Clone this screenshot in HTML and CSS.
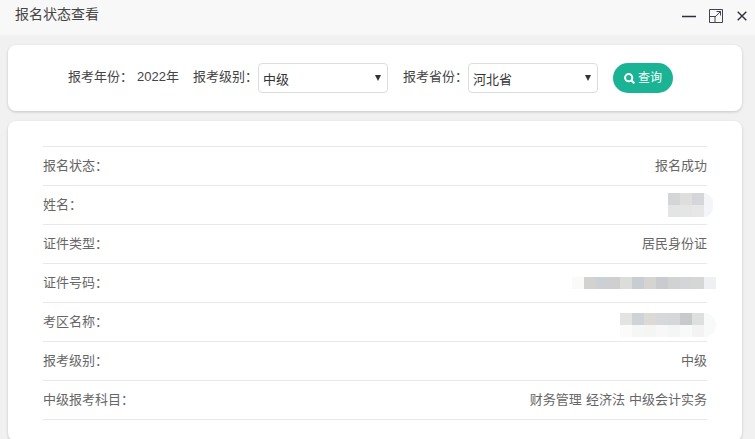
FILE: index.html
```html
<!DOCTYPE html>
<html lang="zh-CN">
<head>
<meta charset="utf-8">
<title>报名状态查看</title>
<link rel="stylesheet" href="styles.css">
</head>
<body>
<header class="titlebar">
  <h1 class="title">报名状态查看</h1>
  <div class="winbtns">
    <svg class="ico" width="14" height="14" viewBox="0 0 14 14"><path d="M0 7.500h14" stroke="#2f2f3a" stroke-width="1.500" fill="none"/></svg>
    <svg class="ico" width="14" height="14" viewBox="0 0 14 14"><path d="M.5.5h13v13H.5zM.5 7.500h5.500v6M6 8l5.500-5.500M7.500 2.500h4v4" stroke="#44444e" fill="none"/></svg>
    <svg class="ico close" width="10" height="10" viewBox="0 0 10 10"><path d="M.7.7l8.600 8.600M9.300.7l-8.600 8.600" stroke="#2f2f3a" stroke-width="1.400" fill="none"/></svg>
  </div>
</header>
<main class="content">
  <section class="card filter">
    <span class="flabel">报考年份：</span>
    <span class="year">2022年</span>
    <span class="flabel">报考级别：</span>
    <span class="select level">中级<i class="caret"></i></span>
    <span class="flabel">报考省份：</span>
    <span class="select province">河北省<i class="caret"></i></span>
    <button class="search"><svg width="11" height="11" viewBox="0 0 11 11"><circle cx="4.700" cy="4.700" r="3.600" stroke="#fff" stroke-width="2" fill="none"/><path d="M7.300 7.300l3 3" stroke="#fff" stroke-width="2.200" fill="none"/></svg>查询</button>
  </section>
  <section class="card info">
    <div class="row"><span>报名状态：</span><span>报名成功</span></div>
    <div class="row"><span>姓名：</span><span class="mosaic m1"><i></i><i></i><i></i><i></i><i></i><i></i><i></i></span></div>
    <div class="row"><span>证件类型：</span><span>居民身份证</span></div>
    <div class="row"><span>证件号码：</span><span class="mosaic m2"><i></i><i></i><i></i><i></i><i></i><i></i><i></i><i></i><i></i><i></i><i></i><i></i></span></div>
    <div class="row"><span>考区名称：</span><span class="mosaic m3"><i></i><i></i><i></i><i></i><i></i><i></i><i></i><i></i><i></i><i></i><i></i><i></i><i></i><i></i><i></i></span></div>
    <div class="row"><span>报考级别：</span><span>中级</span></div>
    <div class="row"><span>中级报考科目：</span><span class="subjects">财务管理 经济法 中级会计实务</span></div>
  </section>
</main>
</body>
</html>
```
FILE: styles.css
```css
* { box-sizing: border-box; }
html, body { margin: 0; height: 100%; }
body {
  background: #f1f1f1;
  font: 13px/18px "Liberation Sans", "Noto Sans CJK SC", sans-serif;
  color: #555;
  overflow: hidden;
}
.titlebar {
  height: 35px;
  background: #f8f8f8;
  display: flex;
  justify-content: space-between;
  padding: 6px 8px 0 15px;
}
.title { margin: 0; font-size: 14px; font-weight: 400; line-height: 16px; color: #444; }
.winbtns { display: flex; align-items: center; gap: 13px; height: 20px; }
.close { margin-left: 1px; }
.content { padding: 10px 13px 0 8px; display: flex; flex-direction: column; gap: 10px; }
.card { background: #fff; border-radius: 8px; box-shadow: 0 1px 3px rgba(0,0,0,.18); }
.filter { height: 66px; display: flex; align-items: center; padding-left: 60px; color: #444; }
.flabel, .year { margin-top: -3px; }
.year { margin: -3px 14px 0 4px; }
.select {
  position: relative;
  width: 130px;
  height: 30px;
  border: 1px solid #ddd;
  border-radius: 4px;
  padding: 7px 0 0 4px;
  color: #333;
}
.level { margin-right: 15px; }
.province { margin-right: 15px; }
.caret {
  position: absolute;
  right: 6px;
  top: 11px;
  border: 3px solid transparent;
  border-top: 6px solid #333;
  border-bottom: 0;
}
.search {
  width: 60px;
  height: 30px;
  border: 0;
  border-radius: 15px;
  background: #1ab394;
  color: #fff;
  font: inherit;
  font-size: 12px;
  display: flex;
  align-items: center;
  justify-content: center;
  gap: 3px;
  padding: 0;
}
.info { height: 320px; padding: 25px 35px 0; color: #666; }
.row {
  height: 39px;
  border-top: 1px solid #e8e8e8;
  display: flex;
  justify-content: space-between;
  align-items: center;
}
.row:last-child { height: 40px; border-bottom: 1px solid #e8e8e8; }
.subjects { word-spacing: .5px; }

.mosaic { display: grid; grid-auto-rows: 12px; }
.mosaic i { background: #fff; }
.m1 { grid-template-columns: repeat(3, 12px) 9px; margin-right: -6px; }
.m1 i:nth-child(1) { background: #d4d5d6; }
.m1 i:nth-child(2) { background: #dedfdc; }
.m1 i:nth-child(3) { background: #d5d6da; }
.m1 i:nth-child(4) { grid-column: 4; grid-row: 1 / span 2; background: #f3f5f8; border-radius: 0 12px 12px 0; }
.m1 i:nth-child(5) { background: #e3e4e4; }
.m1 i:nth-child(6) { background: #e4e5e4; }
.m1 i:nth-child(7) { background: #e6e7e6; }

.m2 { grid-template-columns: repeat(12, 12px); margin-right: -9px; }
.m2 i:nth-child(1) { background: #fafafa; }
.m2 i:nth-child(2) { background: #d2d2d0; }
.m2 i:nth-child(3) { background: #ccd0d4; }
.m2 i:nth-child(4) { background: #cfcfd1; }
.m2 i:nth-child(5) { background: #dcdcd8; }
.m2 i:nth-child(6) { background: #c8cdd2; }
.m2 i:nth-child(7) { background: #d5d4d1; }
.m2 i:nth-child(8) { background: #c9cbd1; }
.m2 i:nth-child(9) { background: #d2d2d2; }
.m2 i:nth-child(10) { background: #d4d5d6; }
.m2 i:nth-child(11) { background: #d5d6d6; }
.m2 i:nth-child(12) { background: #eff0f2; }

.m3 { grid-template-columns: repeat(7, 12px) 12px; margin: 6px -9px 0 0; }
.m3 i:nth-child(1) { background: #e3e3e1; }
.m3 i:nth-child(2) { background: #d0d3d6; }
.m3 i:nth-child(3) { background: #dbdad7; }
.m3 i:nth-child(4) { background: #d7d8dc; }
.m3 i:nth-child(5) { background: #d6d7d8; }
.m3 i:nth-child(6) { background: #c8c9ca; }
.m3 i:nth-child(7) { background: #dde0df; }
.m3 i:nth-child(8) { grid-column: 8; grid-row: 1 / span 2; background: #f8f9f9; border-radius: 0 12px 12px 0; }
.m3 i:nth-child(9) { background: #fbfbfb; }
.m3 i:nth-child(10) { background: #f5f6f6; }
.m3 i:nth-child(11) { background: #f5f5f3; }
.m3 i:nth-child(12) { background: #f8f8f8; }
.m3 i:nth-child(13) { background: #f4f5f5; }
.m3 i:nth-child(14) { background: #f8f9f9; }
.m3 i:nth-child(15) { background: #f3f3f3; }
```
